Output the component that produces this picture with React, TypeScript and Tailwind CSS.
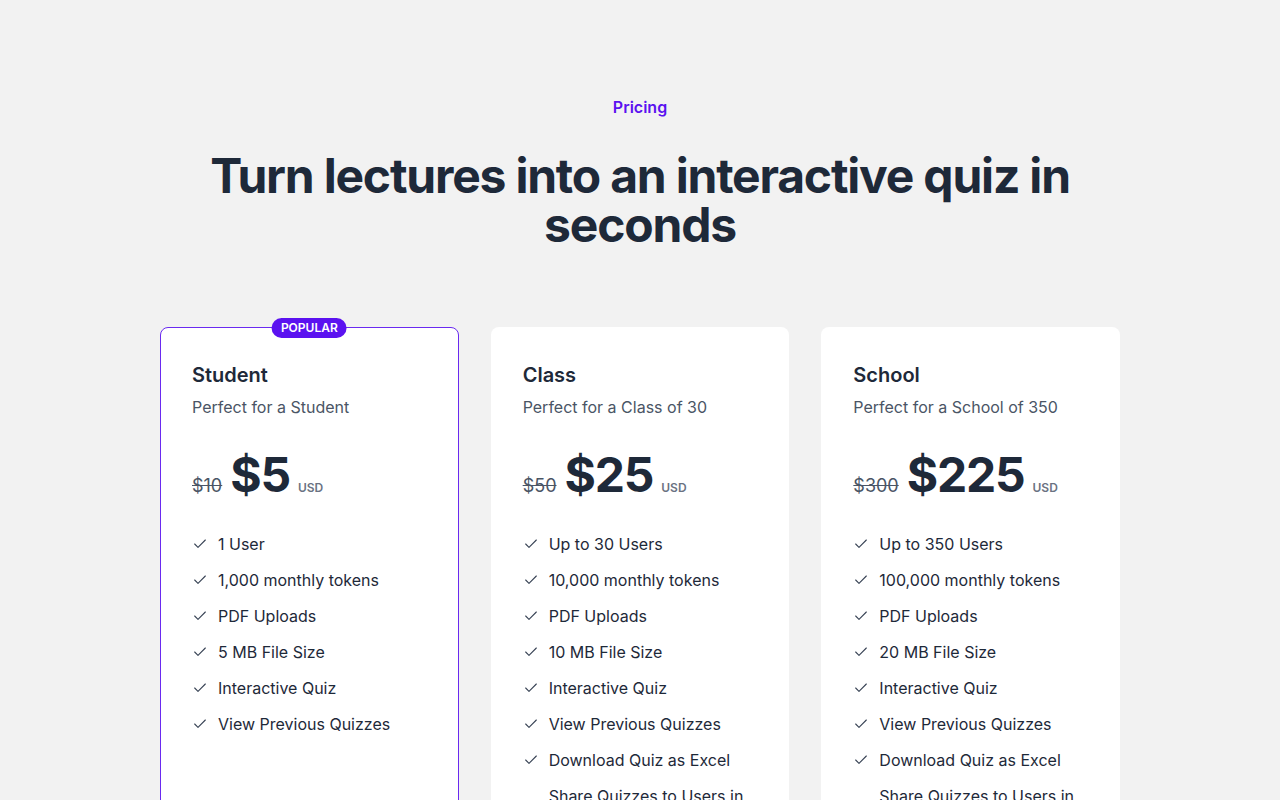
import { Check } from "lucide-react";

type Plan = {
  name: string;
  tagline: string;
  oldPrice: string;
  price: string;
  popular?: boolean;
  features: string[];
};

const PLANS: Plan[] = [
  {
    name: "Student",
    tagline: "Perfect for a Student",
    oldPrice: "$10",
    price: "$5",
    popular: true,
    features: [
      "1 User",
      "1,000 monthly tokens",
      "PDF Uploads",
      "5 MB File Size",
      "Interactive Quiz",
      "View Previous Quizzes",
    ],
  },
  {
    name: "Class",
    tagline: "Perfect for a Class of 30",
    oldPrice: "$50",
    price: "$25",
    features: [
      "Up to 30 Users",
      "10,000 monthly tokens",
      "PDF Uploads",
      "10 MB File Size",
      "Interactive Quiz",
      "View Previous Quizzes",
      "Download Quiz as Excel",
      "Share Quizzes to Users in your Organization",
    ],
  },
  {
    name: "School",
    tagline: "Perfect for a School of 350",
    oldPrice: "$300",
    price: "$225",
    features: [
      "Up to 350 Users",
      "100,000 monthly tokens",
      "PDF Uploads",
      "20 MB File Size",
      "Interactive Quiz",
      "View Previous Quizzes",
      "Download Quiz as Excel",
      "Share Quizzes to Users in your Organization",
    ],
  },
];

function PlanCard({ plan }: { plan: Plan }) {
  return (
    <div
      className={
        plan.popular
          ? "relative rounded-lg bg-white px-[31px] pt-[33px] pb-10 border border-[#6a2af0]"
          : "relative rounded-lg bg-white px-[31px] pt-[33px] pb-10 border border-transparent"
      }
    >
      {plan.popular && (
        <span className="absolute left-1/2 -top-[10px] -translate-x-1/2 rounded-full bg-[#5b12f0] px-[9px] h-5 flex items-center text-xs font-semibold text-white uppercase">
          Popular
        </span>
      )}

      <h3 className="text-xl font-semibold text-gray-800">{plan.name}</h3>
      <p className="mt-1.5 text-base text-gray-600">{plan.tagline}</p>

      <div className="mt-8 flex items-baseline">
        <span className="text-lg text-gray-600 line-through mr-2">{plan.oldPrice}</span>
        <span className="text-5xl leading-[48px] font-bold tracking-tight text-gray-800">{plan.price}</span>
        <span className="ml-2 text-xs font-semibold text-gray-500">USD</span>
      </div>

      <ul className="mt-8 space-y-3">
        {plan.features.map(f => (
          <li key={f} className="flex items-center gap-2.5 text-base text-gray-800">
            <Check className="w-4 h-4 shrink-0 text-gray-700" strokeWidth={1.6} />
            <span>{f}</span>
          </li>
        ))}
      </ul>
    </div>
  );
}

export default function App() {
  return (
    <div
      className="min-h-screen bg-[#f2f2f2] pt-[95px] pb-24"
      style={{ fontFamily: "Inter, 'Noto Sans', sans-serif" }}
    >
      <div className="mx-auto max-w-5xl px-8">
        <div className="mx-auto max-w-4xl text-center">
          <p className="text-base font-semibold text-[#5b12f0]">Pricing</p>
          <h2 className="mt-8 text-5xl leading-[49px] font-bold tracking-tight text-gray-800">
            Turn lectures into an interactive quiz in seconds
          </h2>
        </div>

        <div className="mt-[78px] grid grid-cols-3 gap-8">
          {PLANS.map(p => (
            <PlanCard key={p.name} plan={p} />
          ))}
        </div>
      </div>
    </div>
  );
}
